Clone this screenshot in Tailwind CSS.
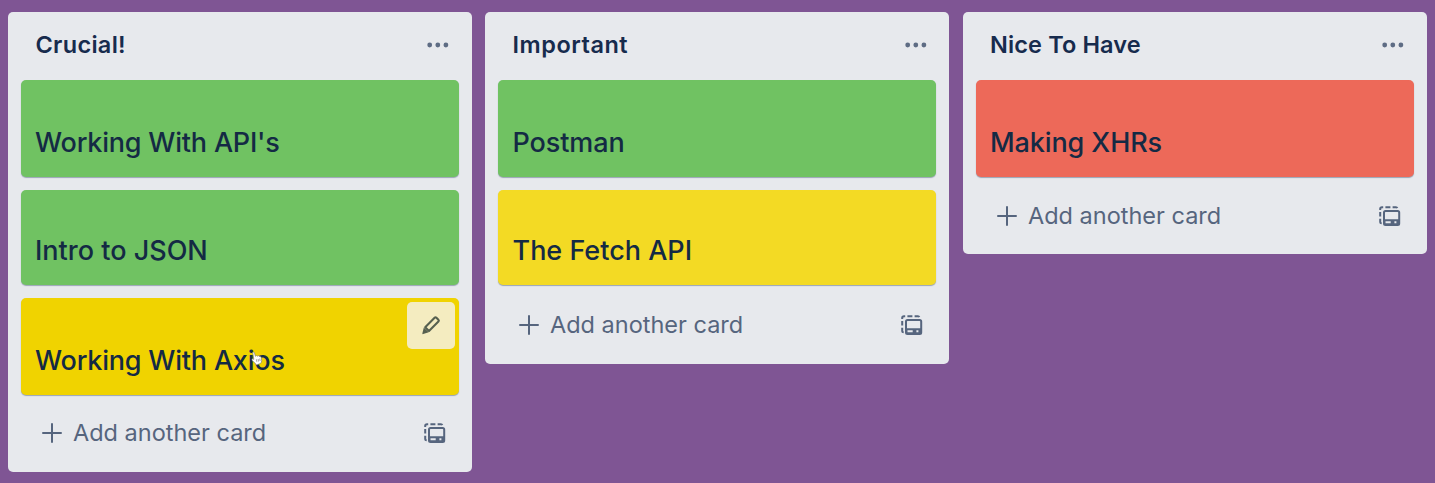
<!DOCTYPE html>
<html lang="en">
<head>
<meta charset="utf-8">
<title>Board</title>
<script src="https://cdn.jsdelivr.net/npm/@tailwindcss/browser@4"></script>
</head>
<body class="h-[483px] w-[1435px] overflow-hidden bg-[#7f5594] font-['Inter',sans-serif] text-[#172b4d]">
<svg class="hidden">
  <symbol id="dots" viewBox="0 0 22 6"><g fill="#5e6c84"><circle cx="2.7" cy="3" r="2.4"/><circle cx="10.8" cy="3" r="2.4"/><circle cx="18.9" cy="3" r="2.4"/></g></symbol>
  <symbol id="plus" viewBox="0 0 20 20"><path d="M10 1v18M1 10h18" stroke="#56657e" stroke-width="2" stroke-linecap="round"/></symbol>
  <symbol id="template" viewBox="0 0 22 20">
    <g fill="none" stroke="#56657e" stroke-width="2">
      <path d="M1.200 4V3a1.800 1.800 0 0 1 1.800-1.800h1.200M6.400 1.200h5M13.600 1.200h3.200a1.500 1.500 0 0 1 1.500 1M1.200 6v4.500M1.200 12.700v3a1.500 1.500 0 0 0 1.500 1.500"/>
      <rect x="5" y="5" width="15.200" height="14" rx="1.500"/>
    </g>
    <path fill="#56657e" fill-rule="evenodd" d="M5 13.200h15V19H5zM6.500 15.200v2h5.200v-2zM15.400 15.200v2h2v-2z"/>
  </symbol>
</svg>
<main class="flex items-start gap-[13.5px] pl-[7.5px] pt-[11.5px]">

  <section class="h-[460.5px] w-[464px] shrink-0 rounded-[5px] bg-[#e7e9ed] px-[13.5px]">
    <header class="flex h-[67px] items-center justify-between pr-[9px] pl-[14.5px]">
      <h2 class="text-[23.5px] leading-[30px] font-semibold tracking-[0.3px]">Crucial!</h2>
      <svg class="h-[6px] w-[22px]"><use href="#dots"/></svg>
    </header>
    <div class="flex flex-col pt-px text-[#142a44]">
      <article class="h-[97px] w-[437.5px] rounded-[5px] bg-[#70c262] pt-[47px] pl-[14px] shadow-[0_1px_1px_#9aa5b5]"><p class="text-[27px] leading-[32px] font-medium whitespace-nowrap tracking-[-0.2px]">Working With API's</p></article>
      <article class="mt-[13px] h-[95px] w-[437.5px] rounded-[5px] bg-[#70c262] pt-[45px] pl-[14px] shadow-[0_1px_1px_#9aa5b5]"><p class="text-[27px] leading-[32px] font-medium whitespace-nowrap">Intro to JSON</p></article>
      <article class="relative mt-[13px] h-[97px] w-[437.5px] rounded-[5px] bg-[#f0d300] pt-[47px] pl-[14px] shadow-[0_1px_1px_#9aa5b5]">
        <p class="text-[27px] leading-[32px] font-medium whitespace-nowrap tracking-[-0.2px]">Working With Axios</p>
        <span class="absolute top-[4px] right-[4px] flex h-[47.5px] w-[47.5px] items-center justify-center rounded-[5px] bg-[#f4ecc0]">
          <svg class="h-[20px] w-[20px]" viewBox="0 0 20 20"><path d="M4.200 12.200 13.600 2.800q.9-.9 1.800 0l2 2q.9.900 0 1.800L8 16z" fill="none" stroke="#56604f" stroke-width="2.100" stroke-linejoin="round"/><path d="M2.800 12.400 7.800 17.200l-5.600 1.900q-1 .2-.8-.9z" fill="#56604f"/></svg>
        </span>
        <svg class="absolute top-[53px] left-[230px] h-[15px] w-[12px]" viewBox="0 0 14 15" preserveAspectRatio="none"><path d="M2 1.500q1.300-1 2 .3l1.200 3.500 1.300-.8 1.200.7 1.300-.5 1 .8q1.700-.3 2 1.200l.5 3q0 1.500-1.500 2.800L6.500 14 4 11.500 1.200 9.400q-.6-1.400.8-1.600l1.300.6z" fill="#fff" stroke="#777" stroke-width=".7"/><path d="M6.300 8.300l.5 2.500M8.300 8l.5 2.500M10.200 7.500l.4 2.500" stroke="#777" stroke-width=".7"/></svg>
      </article>
    </div>
    <footer class="flex h-[77px] items-center pr-[12px] pl-[21px]">
      <svg class="h-[20px] w-[20px]"><use href="#plus"/></svg>
      <span class="ml-[11px] text-[23.5px] leading-[30px] whitespace-nowrap text-[#56657e]">Add another card</span>
      <svg class="ml-auto h-[20px] w-[22px]"><use href="#template"/></svg>
    </footer>
  </section>

  <section class="h-[352.5px] w-[464px] shrink-0 rounded-[5px] bg-[#e7e9ed] px-[13.5px]">
    <header class="flex h-[67px] items-center justify-between pr-[9px] pl-[14px]">
      <h2 class="text-[23.5px] leading-[30px] font-semibold tracking-[0.52px]">Important</h2>
      <svg class="h-[6px] w-[22px]"><use href="#dots"/></svg>
    </header>
    <div class="flex flex-col pt-px text-[#142a44]">
      <article class="-ml-[0.5px] h-[97px] w-[438px] rounded-[5px] bg-[#70c262] pt-[47px] pl-[14.5px] shadow-[0_1px_1px_#9aa5b5]"><p class="text-[27px] leading-[32px] font-medium whitespace-nowrap tracking-[-0.1px]">Postman</p></article>
      <article class="-ml-[0.5px] mt-[13px] h-[95px] w-[438px] rounded-[5px] bg-[#f3da24] pt-[45px] pl-[14.5px] shadow-[0_1px_1px_#9aa5b5]"><p class="text-[27px] leading-[32px] font-medium whitespace-nowrap">The Fetch API</p></article>
    </div>
    <footer class="flex h-[81px] items-center pr-[12.5px] pl-[20.5px]">
      <svg class="h-[20px] w-[20px]"><use href="#plus"/></svg>
      <span class="ml-[11px] text-[23.5px] leading-[30px] whitespace-nowrap text-[#56657e]">Add another card</span>
      <svg class="ml-auto h-[20px] w-[22px]"><use href="#template"/></svg>
    </footer>
  </section>

  <section class="h-[242.5px] w-[464px] shrink-0 rounded-[5px] bg-[#e7e9ed] px-[13.5px]">
    <header class="flex h-[67px] items-center justify-between pr-[9px] pl-[14px]">
      <h2 class="text-[23.5px] leading-[30px] font-semibold tracking-[0.13px]">Nice To Have</h2>
      <svg class="h-[6px] w-[22px]"><use href="#dots"/></svg>
    </header>
    <div class="flex flex-col pt-px text-[#142a44]">
      <article class="h-[97px] w-[437.5px] rounded-[5px] bg-[#ed6959] pt-[47px] pl-[14px] shadow-[0_1px_1px_#9aa5b5]"><p class="text-[27px] leading-[32px] font-medium whitespace-nowrap tracking-[-0.1px]">Making XHRs</p></article>
    </div>
    <footer class="flex h-[78px] items-center pr-[12px] pl-[21px]">
      <svg class="h-[20px] w-[20px]"><use href="#plus"/></svg>
      <span class="ml-[11px] text-[23.5px] leading-[30px] whitespace-nowrap text-[#56657e]">Add another card</span>
      <svg class="ml-auto h-[20px] w-[22px]"><use href="#template"/></svg>
    </footer>
  </section>
</main>
</body>
</html>
